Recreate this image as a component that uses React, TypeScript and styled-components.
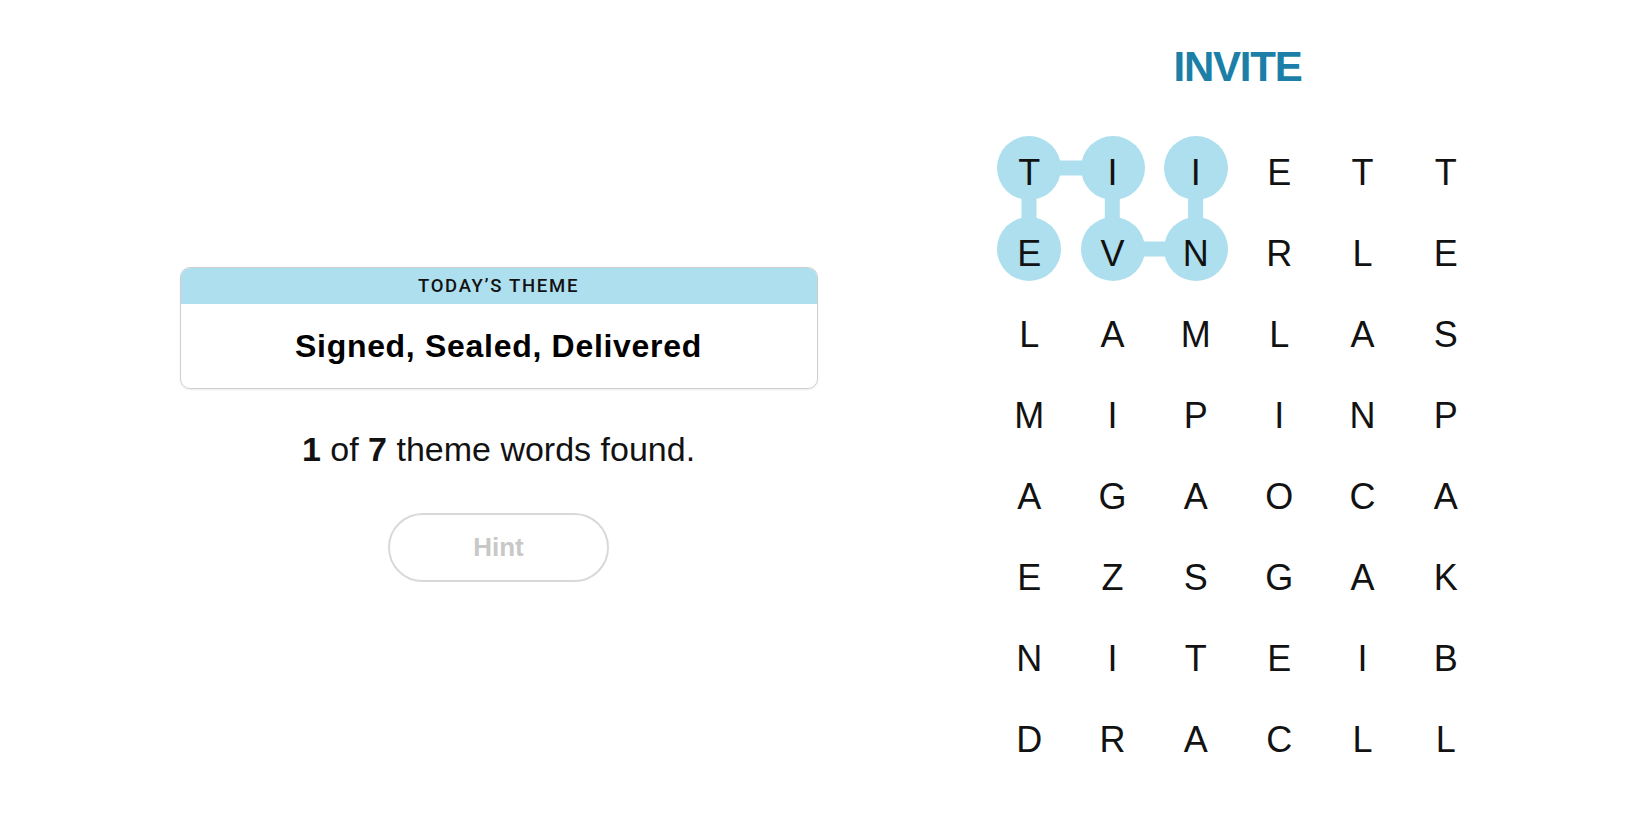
import React from "react";
import styled, { createGlobalStyle } from "styled-components";

const GlobalStyle = createGlobalStyle`
  html, body {
    margin: 0;
    padding: 0;
    background: #ffffff;
  }
  body {
    font-family: "Liberation Sans", Arial, sans-serif;
    color: #121212;
  }
`;

const Page = styled.div`
  display: flex;
  width: 1650px;
  height: 825px;
  overflow: hidden;
`;

const LeftPane = styled.section`
  width: 825px;
  box-sizing: border-box;
  padding: 267px 0 0 172px;
  display: flex;
  flex-direction: column;
  align-items: center;
`;

const RightPane = styled.section`
  width: 825px;
  box-sizing: border-box;
  padding-top: 46px;
  display: flex;
  flex-direction: column;
  align-items: center;
`;

const ThemeCard = styled.div`
  width: 638px;
  box-sizing: border-box;
  border: 1px solid #cfcfcf;
  border-radius: 10px;
  overflow: hidden;
  box-shadow: 0 1px 2px rgba(0, 0, 0, 0.08);
`;

const ThemeHeader = styled.div`
  height: 36px;
  background: #aedfee;
  display: flex;
  align-items: center;
  justify-content: center;
  font-family: Roboto, "Liberation Sans", sans-serif;
  font-weight: 500;
  font-size: 18.5px;
  letter-spacing: 1.7px;
  color: #121212;
`;

const ThemeBody = styled.div`
  height: 84px;
  display: flex;
  align-items: center;
  justify-content: center;
  font-weight: 700;
  font-size: 32px;
  letter-spacing: 0.7px;
  color: #000;
`;

const Progress = styled.p`
  margin: 40px 0 0;
  font-size: 34px;
  line-height: 1.2;
  color: #121212;

  b {
    font-weight: 700;
  }
`;

const HintButton = styled.button`
  margin-top: 43px;
  width: 221px;
  height: 69px;
  box-sizing: border-box;
  border: 2px solid #d9d9d9;
  border-radius: 35px;
  background: #fff;
  font-family: "Liberation Sans", Arial, sans-serif;
  font-weight: 700;
  font-size: 26px;
  color: #c8c8c8;
  cursor: default;
`;

const FoundWord = styled.h1`
  margin: 0;
  font-size: 42px;
  line-height: 42px;
  font-weight: 700;
  letter-spacing: -1.2px;
  color: #1b7fa7;
`;

const Board = styled.div`
  position: relative;
  margin-top: 48px;
  display: grid;
  grid-template-columns: repeat(6, 64px);
  grid-auto-rows: 64px;
  column-gap: 19.3px;
  row-gap: 17px;
`;

const Links = styled.svg`
  position: absolute;
  inset: 0;
  width: 100%;
  height: 100%;
  pointer-events: none;
  z-index: 0;
`;

const Cell = styled.div<{ $found?: boolean }>`
  position: relative;
  z-index: 1;
  width: 64px;
  height: 64px;
  box-sizing: border-box;
  padding-top: 10px;
  border-radius: 50%;
  background: ${(p) => (p.$found ? "#aedfee" : "transparent")};
  display: flex;
  align-items: center;
  justify-content: center;
  font-size: 36px;
  color: #121212;
`;

const rows = [
  "TIIETT",
  "EVNRLE",
  "LAMLAS",
  "MIPINP",
  "AGAOCA",
  "EZSGAK",
  "NITEIB",
  "DRACLL",
];

const found: [number, number][] = [
  [0, 2],
  [1, 2],
  [1, 1],
  [0, 1],
  [0, 0],
  [1, 0],
];

const COL = 83.3;
const ROW = 81;
const R = 32;

const isFound = (r: number, c: number) =>
  found.some(([fr, fc]) => fr === r && fc === c);

export default function App() {
  return (
    <>
      <GlobalStyle />
      <Page>
        <LeftPane>
          <ThemeCard>
            <ThemeHeader>TODAY’S THEME</ThemeHeader>
            <ThemeBody>Signed, Sealed, Delivered</ThemeBody>
          </ThemeCard>
          <Progress>
            <b>1</b> of <b>7</b> theme words found.
          </Progress>
          <HintButton>Hint</HintButton>
        </LeftPane>
        <RightPane>
          <FoundWord>INVITE</FoundWord>
          <Board>
            <Links>
              {found.slice(1).map(([r, c], i) => {
                const [pr, pc] = found[i];
                return (
                  <line
                    key={i}
                    x1={pc * COL + R}
                    y1={pr * ROW + R}
                    x2={c * COL + R}
                    y2={r * ROW + R}
                    stroke="#aedfee"
                    strokeWidth={15}
                  />
                );
              })}
            </Links>
            {rows.map((row, r) =>
              row.split("").map((ch, c) => (
                <Cell key={`${r}-${c}`} $found={isFound(r, c)}>
                  {ch}
                </Cell>
              ))
            )}
          </Board>
        </RightPane>
      </Page>
    </>
  );
}
